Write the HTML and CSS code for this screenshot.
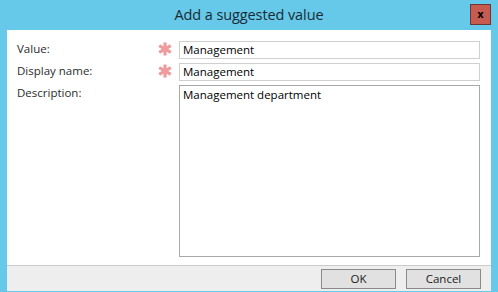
FILE: index.html
```html
<!DOCTYPE html>
<html>
<head>
<meta charset="utf-8">
<link rel="stylesheet" href="styles.css">
</head>
<body>
<div class="window">
  <div class="titlebar">
    <div class="title">Add a suggested value</div>
    <button class="close" type="button">x</button>
  </div>
  <div class="panel">
    <div class="form">
      <label class="lbl">Value:</label>
      <span class="req"><svg width="14" height="14" viewBox="0 0 14 14"><g stroke="#ec9c9c" stroke-width="3.2" stroke-linecap="butt"><line x1="7" y1="0.5" x2="7" y2="13.5"/><line x1="1.2" y1="3.6" x2="12.8" y2="10.4"/><line x1="1.2" y1="10.4" x2="12.8" y2="3.6"/></g></svg></span>
      <div class="input">Management</div>

      <label class="lbl">Display name:</label>
      <span class="req"><svg width="14" height="14" viewBox="0 0 14 14"><g stroke="#ec9c9c" stroke-width="3.2" stroke-linecap="butt"><line x1="7" y1="0.5" x2="7" y2="13.5"/><line x1="1.2" y1="3.6" x2="12.8" y2="10.4"/><line x1="1.2" y1="10.4" x2="12.8" y2="3.6"/></g></svg></span>
      <div class="input">Management</div>

      <label class="lbl">Description:</label>
      <span class="req"></span>
      <div class="textarea">Management department</div>
    </div>
    <div class="footer">
      <button class="btn" type="button">OK</button>
      <button class="btn" type="button">Cancel</button>
    </div>
  </div>
</div>
</body>
</html>
```
FILE: styles.css
```css
html, body {
  margin: 0;
  padding: 0;
}
body {
  width: 498px;
  height: 292px;
  background: #66c9ea;
  font-family: "Open Sans", "Noto Sans", sans-serif;
  overflow: hidden;
}
.window {
  display: flex;
  flex-direction: column;
  height: 292px;
}
.titlebar {
  height: 30px;
  display: flex;
  align-items: flex-start;
  justify-content: center;
  position: relative;
}
.title {
  font-size: 14.5px;
  color: #1c2a33;
  line-height: 18px;
  margin-top: 6px;
  letter-spacing: -0.1px;
}
.close {
  position: absolute;
  left: 470px;
  top: 4px;
  width: 21px;
  height: 21px;
  box-sizing: border-box;
  background: #c75b50;
  border: 1px solid #6d3731;
  padding: 0;
  font-family: "DejaVu Sans", sans-serif;
  font-weight: bold;
  font-size: 10px;
  line-height: 17px;
  color: #000;
}
.panel {
  margin: 0 7px 1px 7px;
  background: #fff;
  flex: 1;
  display: flex;
  flex-direction: column;
}
.form {
  flex: 1;
  display: grid;
  grid-template-columns: 141px 21px 301px;
  grid-template-rows: 18px 18px 172px;
  row-gap: 4px;
  padding: 11px 0 0 10px;
}
.lbl {
  font-size: 11.5px;
  color: #2b2b2b;
  line-height: 14px;
  margin-top: 1px;
}
.req {
  display: flex;
  padding-top: 1px;
}
.input, .textarea {
  box-sizing: border-box;
  font-size: 11.5px;
  color: #000;
  padding: 0 0 0 3px;
  line-height: 16px;
}
.input {
  border: 1px solid #cfcfcf;
}
.textarea {
  border: 1px solid #a8a8a8;
  padding-top: 1px;
}
.footer {
  border-top: 1px solid #cbcbcb;
  background: #eeeeee;
  height: 26px;
  display: flex;
  justify-content: flex-end;
  align-items: flex-start;
  gap: 10px;
  padding: 3px 10px 0 0;
  box-sizing: border-box;
}
.btn {
  width: 75px;
  height: 20px;
  box-sizing: border-box;
  background: #e1e1e1;
  border: 1px solid #8a8a8a;
  font-family: "Open Sans", "Noto Sans", sans-serif;
  font-size: 11.5px;
  color: #1b1b1b;
  padding: 0;
  line-height: 16px;
}
```
